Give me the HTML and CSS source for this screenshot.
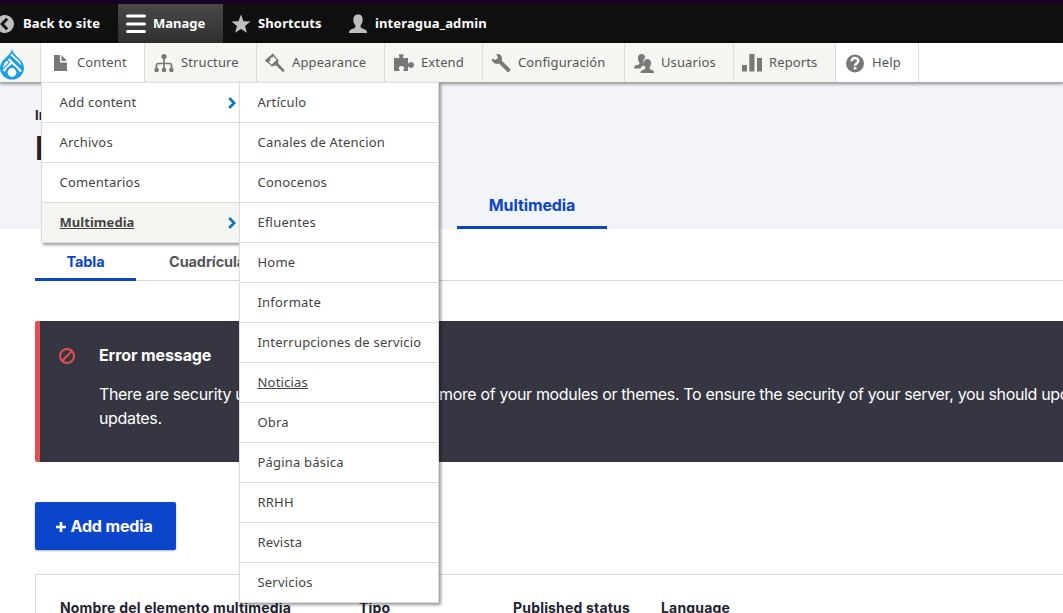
FILE: index.html
```html
<!DOCTYPE html>
<html lang="es">
<head>
<meta charset="utf-8">
<title>Multimedia</title>
<link rel="stylesheet" href="styles.css">
</head>
<body>
<nav class="bar">
  <a class="bar-item back"><svg class="bar-icon" viewBox="0 0 20 20"><circle cx="10" cy="10" r="9" fill="#bebebe"/><path d="M12.2 4.8 7 10l5.2 5.2" fill="none" stroke="#0f0f0f" stroke-width="2.8"/></svg><span>Back to site</span></a>
  <a class="bar-item manage"><svg class="bar-icon" viewBox="0 0 20 20"><path d="M1.500 2h17M1.500 10h17M1.500 17.500h17" stroke="#fff" stroke-width="3" stroke-linecap="round"/></svg><span>Manage</span></a>
  <a class="bar-item shortcuts"><svg class="bar-icon" viewBox="0 0 20 20"><path d="m10 .5 2.500 6.700 7 .3-5.500 4.400 1.900 6.900L10 14.900l-5.900 3.900L6 11.900.5 7.500l7-.3z" fill="#bebebe"/></svg><span>Shortcuts</span></a>
  <a class="bar-item user"><svg class="bar-icon" viewBox="0 0 20 20"><path d="M10 .5c3.300 0 4.700 2 4.700 5 0 2.500-.8 4.700-2.200 6 0 2.300.7 2.600 3.500 3.500 2.300.7 3 2 3 4H1c0-2 .7-3.300 3-4 2.800-.9 3.500-1.200 3.500-3.500-1.400-1.300-2.200-3.500-2.200-6 0-3 1.400-5 4.700-5z" fill="#bebebe"/></svg><span>interagua_admin</span></a>
</nav>
<nav class="tray">
  <a class="home"><svg class="drop" viewBox="0 0 24 32"><path d="M12 1C11 5 8.500 7.200 5.500 10 2 13 0 16 0 20a12 11.500 0 0 0 24 0c0-4-2-7-5.500-10C15.500 7.200 13 5 12 1z" fill="#1ba0e2"/><path d="m8.700 11 12.300 12.500M11.500 14.500 3.500 23" fill="none" stroke="#fff" stroke-width="2.300"/><path d="M12 5.500c1 2 3.500 4 5.500 5.800 2 1.700 3.500 3.800 4 6.200L10.500 7.200zM7 12.500l1.800 1.800L3 20c0-3 1.500-5.300 4-7.500z" fill="#fff"/><path d="m10.500 9 11 11" stroke="#1ba0e2" stroke-width="1.800"/><circle cx="12" cy="24.500" r="5.500" fill="#fff" stroke="#1ba0e2" stroke-width="2.200"/></svg></a>
  <a class="tab tab-content"><svg class="icon" viewBox="0 0 20 20"><path d="M4 2h6v7.500h7V18H4zM11.500 2 17 8h-5.500z"/></svg><span>Content</span></a>
  <a class="tab tab-structure"><svg class="icon" viewBox="0 0 20 20"><circle cx="10" cy="3.500" r="2.600"/><path d="M10 4v13M2.500 17v-4.500q0-2 2-2h11q2 0 2 2V17" fill="none" stroke="#787878" stroke-width="1.700"/><circle cx="2.600" cy="17" r="2.300"/><circle cx="10" cy="17" r="2.300"/><circle cx="17.400" cy="17" r="2.300"/></svg><span>Structure</span></a>
  <a class="tab tab-appearance shift"><svg class="icon" viewBox="0 0 20 20"><path d="M1 7.500 8 1.500l4.500 5.500-5.500 5.500z" fill="#f5f5f2" stroke="#787878" stroke-width="1.200"/><path d="m0 7.500 7.800-7 1.800 2.300-4 2.500-.8 3-2.200 1.700zM6 12.500l6.500-6.500 1 1.500-.5 2.800 6 6.200q1 2-1.200 2.500L11.300 12.500l-2.800.3-1.500 1z"/></svg><span>Appearance</span></a>
  <a class="tab tab-extend"><svg class="icon" viewBox="0 0 20 20"><path d="M0 5h5.300c1-.8-.6-1.500-.6-2.700 0-1.400 5-1.400 5 0 0 1.200-1.600 1.900-.6 2.700H14v5c1 1.200 1.500-1 3-1 1.800 0 3 1.400 3 3s-1.200 3-3 3c-1.500 0-2-1.700-3-1v4H9.500c-.9-.8.7-1.400.7-2.700 0-3.200-5.400-3.200-5.400 0 0 1.300 1.600 1.900.7 2.700H0z"/></svg><span>Extend</span></a>
  <a class="tab tab-config shift"><svg class="icon" viewBox="0 0 20 20"><path d="M1 5.500 4.500 7 7 4.800 5.300 1.300C8 0 11.300 2.200 11 6c0 1.200-.3 1.700.6 2.600l7.200 7c1.500 1.600-.9 4.500-2.800 2.800l-7-7c-.7-.8-1.500-.6-2.500-.5C3.300 11 .5 8.500 1 5.500z"/></svg><span>Configuración</span></a>
  <a class="tab tab-users"><svg class="icon" viewBox="0 0 20 20"><path d="M7.500 1c2.500 0 3.800 1.600 3.500 4-1.800 1.300-2 3.600-1 6l.5 1.200c-2 .5-3.500 1-4 3.300H0c0-2 .7-2.800 3-3.400 2-.6 2.600-1 2.600-2.600C3.200 7 3.300 1 7.500 1z"/><path d="M13.500 6c4.300 0 4.300 5.800 2 8.500 0 1.600.6 1.900 2.500 2.400 1.600.5 2 1.300 2 3.100H6.500c0-1.800.5-2.600 2.300-3.100 2-.5 2.600-.9 2.600-2.400C9 11.700 9.200 6 13.500 6z"/></svg><span>Usuarios</span></a>
  <a class="tab tab-reports shift"><svg class="icon" viewBox="0 0 20 20"><path d="M0 12h5v6.500H0zM7.300 1h5.200v17.500H7.300zM15 5h5v13.500h-5z"/></svg><span>Reports</span></a>
  <a class="tab tab-help"><svg class="icon" viewBox="0 0 20 20"><circle cx="10" cy="10.500" r="9"/><path d="M6.700 8.300C6.800 4 13.200 4 13.200 7.900c0 2.400-3.100 2.300-3.100 4.900" fill="none" stroke="#fff" stroke-width="2.400"/><path d="M8.800 14h2.600v2.500H8.800z" fill="#fff"/></svg><span>Help</span></a>

  <ul class="menu menu-first">
    <li class="parent">Add content<svg class="chevron" viewBox="0 0 8 12"><path d="m1.200 1 5 5-5 5" fill="none" stroke="#0f75bd" stroke-width="2.700"/></svg></li>
    <li>Archivos</li>
    <li>Comentarios</li>
    <li class="parent active"><b>Multimedia</b><svg class="chevron" viewBox="0 0 8 12"><path d="m1.200 1 5 5-5 5" fill="none" stroke="#0f75bd" stroke-width="2.700"/></svg></li>
  </ul>
  <ul class="menu menu-second">
    <li>Artículo</li><li>Canales de Atencion</li><li>Conocenos</li><li>Efluentes</li><li>Home</li><li>Informate</li><li>Interrupciones de servicio</li><li><u>Noticias</u></li><li>Obra</li><li>Página básica</li><li>RRHH</li><li>Revista</li><li>Servicios</li>
  </ul>
</nav>
<header class="page-head">
  <div class="crumb">Inicio</div>
  <h1 class="title">Multimedia</h1>
  <div class="primary"><a class="primary-tab">Multimedia</a></div>
</header>
<main class="page">
  <div class="secondary"><a class="sub on">Tabla</a><a class="sub">Cuadrícula</a></div>
  <section class="error">
    <svg class="stop" viewBox="0 0 16 16"><circle cx="8" cy="8" r="7" fill="none" stroke="#e34f4f" stroke-width="2"/><path d="m3.300 12.700 9.400-9.400" stroke="#e34f4f" stroke-width="2"/></svg>
    <div class="error-body">
      <h2 class="error-title">Error message</h2>
      <p class="error-text"><span class="lead">There are security updates available for one or </span>more of your modules or themes. To ensure the security of your server, you should update<br>updates.</p>
    </div>
  </section>
  <a class="add"><svg class="plus" viewBox="0 0 10 10"><path d="M5 0v10M0 5h10" stroke="#fff" stroke-width="2.700"/></svg><span>Add media</span></a>
  <div class="table"><span>Nombre del elemento multimedia</span><span>Tipo</span><span>Published status</span><span>Language</span></div>
</main>
</body>
</html>
```
FILE: styles.css
```css
* { box-sizing: border-box; }
html, body { margin: 0; height: 613px; overflow: hidden; }
body { background: #fff; font-family: Inter, "Liberation Sans", sans-serif; color: #222330; }
ul, h1, h2, p { margin: 0; padding: 0; list-style: none; }

.bar { display: flex; height: 43px; background: #0f0f0f; border-top: 4px solid #160029; font: 700 13px/39px "Noto Sans", sans-serif; letter-spacing: .13px; color: #fff; }
.bar-item { display: flex; align-items: center; white-space: nowrap; }
.bar-icon { width: 20px; height: 20px; flex: none; }
.back { width: 118px; }
.back .bar-icon { margin: 0 8px 0 -5px; }
.manage { width: 105px; padding-left: 8px; gap: 7px; background: linear-gradient(#494949, #303030); letter-spacing: 0; }
.shortcuts { width: 125px; padding-left: 8px; gap: 7px; }
.user { gap: 7px; }

.tray { position: relative; z-index: 2; display: flex; height: 40px; background: #fff; border-bottom: 1px solid #a9a9a9; box-shadow: 0 1px 3px rgba(0,0,0,.45); font: 13px/39px "Noto Sans", sans-serif; letter-spacing: .12px; color: #565656; }
.home { width: 41px; background: #f5f5f2; border-right: 1px solid #ddd; padding: 5px 0 0; }
.drop { display: block; width: 24px; height: 32px; }
.tab { display: flex; align-items: center; gap: 7px; padding-left: 9px; background: #f5f5f2; border-right: 1px solid #ddd; white-space: nowrap; }
.shift { padding-left: 8px; }
.icon { width: 20px; height: 20px; flex: none; fill: #787878; }
.tab-content { width: 104px; background: #fff; }
.tab-structure { width: 112px; }
.tab-appearance { width: 128px; }
.tab-extend { width: 98px; }
.tab-config { width: 142px; }
.tab-users { width: 109px; }
.tab-reports { width: 102px; }
.tab-help { width: 83px; background: #fff; }

.menu { position: absolute; top: 39px; background: #fff; border: 1px solid #ddd; border-bottom: 0; box-shadow: 2px 2px 3px rgba(0,0,0,.4); line-height: 39px; letter-spacing: .2px; color: #444; }
.menu li { display: flex; height: 40px; padding-left: 17.500px; border-bottom: 1px solid #ddd; white-space: nowrap; }
.menu-first { left: 41px; width: 199px; }
.menu-second { left: 239px; width: 200px; }
.menu .parent { align-items: center; justify-content: space-between; padding-right: 3px; }
.active { background: #f5f5f2; text-decoration: underline; letter-spacing: .05px; }
.chevron { width: 8px; height: 12px; }

.page-head { height: 146px; padding: 24px 35px 0; background: #f3f4f9; display: flex; flex-direction: column; }
.crumb { height: 16px; font: 700 13px/16px Inter, sans-serif; }
.title { height: 50px; padding-top: 1px; font: 700 32px/50px Inter, sans-serif; }
.primary { display: flex; margin-top: auto; padding-left: 422px; }
.primary-tab { width: 150px; height: 48px; border-bottom: 3px solid #0a45cc; text-align: center; font-weight: 700; font-size: 16px; line-height: 48px; letter-spacing: -.1px; color: #0a45cc; }

.page { padding-left: 35px; }
.secondary { display: flex; height: 52px; border-bottom: 1px solid #d3d4d9; font-weight: 700; font-size: 14.500px; line-height: 66px; letter-spacing: -.1px; color: #55565b; }
.sub { height: 52px; padding-left: 33px; }
.on { width: 101px; padding-left: 0; text-align: center; color: #0a45cc; border-bottom: 3px solid #0a45cc; }
.error { display: flex; height: 141px; margin-top: 40px; padding: 26px 0 0 19px; background: #353641; border-left: 5px solid #e34f4f; border-radius: 2px 0 0 2px; color: #fff; overflow: hidden; }
.stop { width: 16px; height: 16px; margin: 1px 24px 0 0; flex: none; }
.error-body { flex: none; }
.error-title { font-size: 16px; line-height: 16px; letter-spacing: -.1px; }
.error-text { margin-top: 19px; font-size: 16px; line-height: 24px; letter-spacing: -.35px; white-space: nowrap; }
.lead { display: inline-block; width: 340px; white-space: pre; vertical-align: top; }
.add { display: flex; align-items: center; width: 141px; height: 48px; margin-top: 40px; padding-left: 20.500px; gap: 5px; background: #0a45cc; border-radius: 2px; box-shadow: 0 1px 2px rgba(0,0,0,.3); color: #fff; font-weight: 700; font-size: 16px; letter-spacing: -.15px; }
.plus { width: 10px; height: 10px; margin-top: 2px; }
.table { display: grid; grid-template-columns: 299px 154px 148px 1fr; height: 60px; margin-top: 24px; padding: 23px 0 0 24px; border: solid #d9d9df; border-width: 1px 0 0 1px; border-radius: 2px 0 0; font-weight: 700; font-size: 14px; line-height: 20px; letter-spacing: .18px; white-space: nowrap; }
```
